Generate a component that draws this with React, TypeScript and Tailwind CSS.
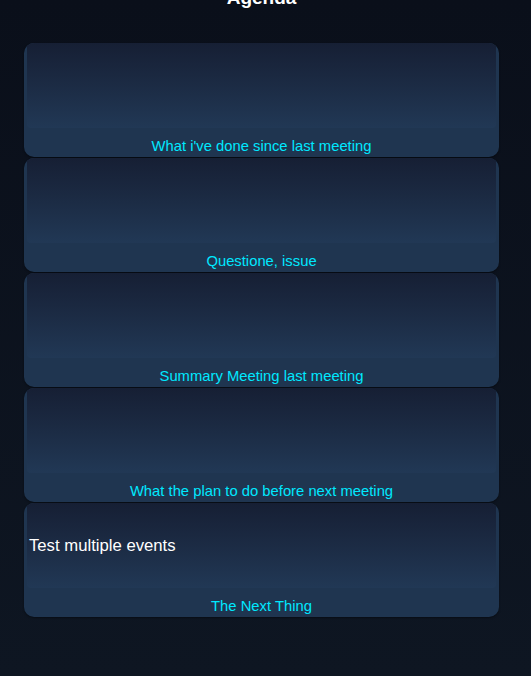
import React from "react";

const items = [
  { label: "What i've done since last meeting", content: "" },
  { label: "Questione, issue", content: "" },
  { label: "Summary Meeting last meeting", content: "" },
  { label: "What the plan to do before next meeting", content: "" },
  { label: "The Next Thing", content: "Test multiple events" },
];

export default function App() {
  return (
    <div
      className="min-h-screen w-full bg-gradient-to-b from-[#0a0f1a] to-[#0e1622] overflow-hidden"
      style={{ fontFamily: '"Liberation Sans", Arial, sans-serif' }}
    >
      <h1 className="mt-[-12px] pr-[8px] text-center text-[19px] font-bold leading-[19px] text-white">
        Agenda
      </h1>
      <div className="ml-[24px] mr-[32px] mt-[36px] flex flex-col gap-[1px]">
        {items.map((it) => (
          <div
            key={it.label}
            className="flex h-[114px] flex-col overflow-hidden rounded-[10px] bg-[#1f3550] shadow-[0_1px_2px_rgba(0,0,0,0.4)]"
          >
            <div className="mx-[3px] flex h-[85px] items-center rounded-b-[4px] bg-gradient-to-b from-[#161f34] to-[#213855] pl-[2px]">
              {it.content && (
                <span className="text-[16.7px] text-white">{it.content}</span>
              )}
            </div>
            <div className="h-[29px] pt-[10px] text-center text-[14.8px] leading-[17px] text-[#00e8ff]">
              {it.label}
            </div>
          </div>
        ))}
      </div>
    </div>
  );
}
